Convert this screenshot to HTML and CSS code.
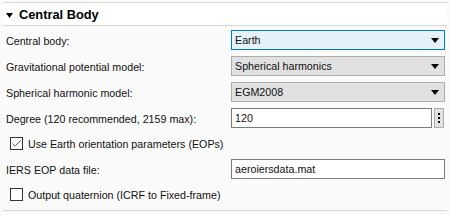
FILE: index.html
```html
<!DOCTYPE html>
<html>
<head>
<meta charset="utf-8">
<link rel="stylesheet" href="styles.css">
</head>
<body>
<div class="panel">
  <div class="header">
    <svg class="caret" width="7" height="5" viewBox="0 0 7 5"><polygon points="0,0 7,0 3.5,5" fill="#000"/></svg>
    <span class="title">Central Body</span>
  </div>
  <div class="content">
    <div class="row">
      <span class="label">Central body:</span>
      <div class="select focused"><span>Earth</span><svg class="arrow" width="8" height="5" viewBox="0 0 8 5"><polygon points="0,0 8,0 4,5" fill="#000"/></svg></div>
    </div>
    <div class="row">
      <span class="label">Gravitational potential model:</span>
      <div class="select"><span>Spherical harmonics</span><svg class="arrow" width="8" height="5" viewBox="0 0 8 5"><polygon points="0,0 8,0 4,5" fill="#000"/></svg></div>
    </div>
    <div class="row">
      <span class="label">Spherical harmonic model:</span>
      <div class="select"><span>EGM2008</span><svg class="arrow" width="8" height="5" viewBox="0 0 8 5"><polygon points="0,0 8,0 4,5" fill="#000"/></svg></div>
    </div>
    <div class="row">
      <span class="label">Degree (120 recommended, 2159 max):</span>
      <div class="combo">
        <div class="input">120</div>
        <div class="spin"><i></i><i></i><i></i></div>
      </div>
    </div>
    <div class="check-row">
      <span class="box"><svg width="11" height="11" viewBox="0 0 11 11"><polyline points="1.5,5.5 4.2,8.2 9.5,2.5" fill="none" stroke="#555" stroke-width="1"/></svg></span>
      <span>Use Earth orientation parameters (EOPs)</span>
    </div>
    <div class="row">
      <span class="label">IERS EOP data file:</span>
      <div class="input">aeroiersdata.mat</div>
    </div>
    <div class="check-row">
      <span class="box"></span>
      <span>Output quaternion (ICRF to Fixed-frame)</span>
    </div>
  </div>
</div>
</body>
</html>
```
FILE: styles.css
```css
html, body {
  margin: 0;
  padding: 0;
}
body {
  width: 451px;
  height: 215px;
  background: #fafafa;
  font-family: "Liberation Sans", Arial, sans-serif;
  font-size: 10.7px;
  color: #111;
  overflow: hidden;
}
.panel {
  margin: 2px 4px 0 3px;
  border-top: 1px solid #d7d7d7;
  border-bottom: 1px solid #d7d7d7;
}
.header {
  height: 22px;
  background: #fff;
  border-bottom: 1px solid #d7d7d7;
  display: flex;
  align-items: center;
  padding-left: 3px;
}
.caret {
  display: block;
  margin-top: 2px;
}
.title {
  font-weight: bold;
  font-size: 12.8px;
  color: #000;
  margin-left: 6px;
}
.content {
  padding: 4px 2px 6px 3px;
  display: flex;
  flex-direction: column;
  gap: 6px;
}
.row {
  display: grid;
  grid-template-columns: 225px 214px;
  align-items: center;
  height: 20px;
}
.label {
  white-space: nowrap;
  padding-top: 2px;
}
.select {
  box-sizing: border-box;
  height: 20px;
  background: #e1e1e1;
  border: 1px solid #adadad;
  display: flex;
  align-items: center;
  justify-content: space-between;
  padding: 0 5px 0 3px;
  color: #111;
}
.select.focused {
  background: #e5f1fb;
  border-color: #0078d7;
}
.arrow {
  display: block;
}
.combo {
  display: flex;
  gap: 2px;
  height: 20px;
}
.input {
  box-sizing: border-box;
  height: 20px;
  background: #fff;
  border: 1px solid #7a7a7a;
  display: flex;
  align-items: center;
  padding-left: 3px;
  flex: 1;
}
.spin {
  box-sizing: border-box;
  width: 10px;
  margin-right: 1px;
  height: 20px;
  background: #e1e1e1;
  border: 1px solid #adadad;
  display: flex;
  flex-direction: column;
  align-items: center;
  justify-content: center;
  gap: 2px;
}
.spin i {
  display: block;
  width: 2px;
  height: 2px;
  background: #000;
}
.check-row {
  height: 19px;
  display: flex;
  align-items: center;
  padding-left: 4px;
  gap: 5px;
}
.box {
  box-sizing: border-box;
  width: 13px;
  height: 13px;
  border: 1px solid #333;
  background: #fff;
  display: flex;
  align-items: center;
  justify-content: center;
}
.box svg {
  display: block;
}
```
